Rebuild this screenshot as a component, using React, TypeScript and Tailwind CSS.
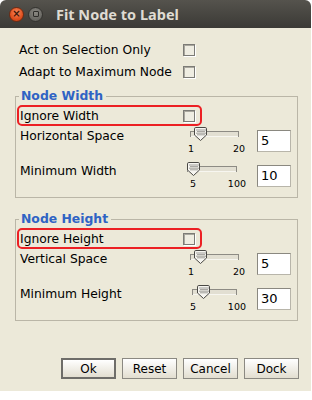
type SliderSpec = {
  trackX: number
  trackW: number
  thumbX: number
  min: string
  max: string
  pad: string
}

const font = { fontFamily: '"DejaVu Sans", Verdana, sans-serif' }

function Checkbox() {
  return (
    <div className="h-[12px] w-[12px] shrink-0 border border-[#7c7b76] bg-[#efede2] shadow-[inset_1px_1px_0_#a9a79e,1px_1px_0_#ffffff]" />
  )
}

function Slider({ s }: { s: SliderSpec }) {
  const dots: [number, number][] = []
  for (let r = 0; r < 4; r++) {
    for (let c = 0; c < 5; c++) {
      const x = 2.5 + c * 2 + (r % 2)
      if (x < 11) dots.push([x, 2.5 + r * 1.6])
    }
  }
  return (
    <div className="mt-[1px] flex w-[62px] flex-col">
      <svg width="62" height="15" viewBox="0 0 62 15">
        <rect x={s.trackX + 0.5} y="4.5" width={s.trackW - 1} height="5" fill="#e2dfd2" stroke="#8d8b84" />
        <line x1={s.trackX + 1} y1="9.5" x2={s.trackX + s.trackW - 1} y2="9.5" stroke="#f7f6f0" />
        <g transform={`translate(${s.thumbX} 0)`}>
          <path d="M0.5 1.8 Q0.5 0.5 1.8 0.5 H11.2 Q12.5 0.5 12.5 1.8 V8 L6.5 13.5 L0.5 8 Z" fill="#f6f5f0" stroke="#4a4945" />
          {dots.map(([x, y], i) => (
            <rect key={i} x={x} y={y} width="1" height="1" fill="#4e4d48" />
          ))}
        </g>
      </svg>
      <div className={`mt-[1px] flex justify-between text-[9.5px] leading-[11px] text-black ${s.pad}`}>
        <span>{s.min}</span>
        <span>{s.max}</span>
      </div>
    </div>
  )
}

function SliderRow({ label, value, s }: { label: string; value: string; s: SliderSpec }) {
  return (
    <div className="flex h-[35px] items-start pl-[4px]">
      <span className="mt-[2px] w-[165px] text-[12.3px] leading-[16px] text-black">{label}</span>
      <Slider s={s} />
      <div className="ml-[10px] mt-[4px] h-[22px] w-[34px] border border-[#8a8880] border-b-[#b8b5aa] border-r-[#b8b5aa] bg-white pl-[3px] text-[13px] leading-[20px] text-black">
        {value}
      </div>
    </div>
  )
}

function Group({ title, ignore, rows }: { title: string; ignore: string; rows: { label: string; value: string; s: SliderSpec }[] }) {
  return (
    <fieldset className="ml-[15px] w-[283px] border border-[#bab6a7] pb-[1px]">
      <legend className="ml-[3px] pl-[2px] pr-[3px] text-[12.4px] font-bold leading-[16px] text-[#2f63c4]">{title}</legend>
      <div className="ml-[1px] mt-[1px] flex h-[21px] w-[185px] items-center rounded-[5px] border-2 border-[#ec2024] pl-[1px]">
        <span className="w-[163px] text-[12.3px] leading-[16px] text-black">{ignore}</span>
        <Checkbox />
      </div>
      {rows.map((r) => (
        <SliderRow key={r.label} label={r.label} value={r.value} s={r.s} />
      ))}
    </fieldset>
  )
}

function Button({ label, focused }: { label: string; focused?: boolean }) {
  return (
    <div
      className={`flex h-[21px] w-[55px] items-center justify-center bg-gradient-to-b from-[#ffffff] to-[#e2ded0] text-[12px] text-black ${
        focused ? 'border-2 border-[#6e6d69]' : 'border border-[#8b8982]'
      }`}
    >
      {label}
    </div>
  )
}

export default function App() {
  return (
    <div className="h-[400px] w-[312px] bg-white" style={font}>
      <div className="flex h-[391px] w-[311px] flex-col">
        <div className="flex h-[28px] shrink-0 items-center rounded-t-[6px] bg-gradient-to-b from-[#55534d] to-[#3b3a36]">
          <div className="ml-[9px] flex h-[15px] w-[15px] items-center justify-center rounded-full border border-[#6e2a12] bg-[radial-gradient(circle_at_50%_35%,#f7885c,#e0501f_60%,#b93a12)] text-[10px] font-bold leading-none text-[#3a1608]">
            ×
          </div>
          <div className="ml-[4px] flex h-[15px] w-[15px] items-center justify-center rounded-full border border-[#34332f] bg-[radial-gradient(circle_at_50%_35%,#8a8882,#6a6964_65%,#55544f)]">
            <div className="h-[6px] w-[6px] rounded-[1px] border border-[#2e2d2a]" />
          </div>
          <span
            className="ml-[13px] text-[14.5px] font-bold leading-none text-[#dfdbd2]"
            style={{ fontFamily: '"Noto Sans", "Open Sans", sans-serif' }}
          >
            Fit Node to Label
          </span>
        </div>

        <div className="flex flex-1 flex-col bg-[#ece9d9] pb-[12px] pt-[11px]">
          <div className="flex h-[22px] items-center pl-[19px]">
            <span className="w-[164px] text-[12.3px] text-black">Act on Selection Only</span>
            <Checkbox />
          </div>
          <div className="flex h-[22px] items-center pl-[19px]">
            <span className="w-[164px] text-[12.3px] text-black">Adapt to Maximum Node</span>
            <Checkbox />
          </div>

          <div className="mt-[5px]">
            <Group
              title="Node Width"
              ignore="Ignore Width"
              rows={[
                { label: 'Horizontal Space', value: '5', s: { trackX: 5, trackW: 49, thumbX: 9, min: '1', max: '20', pad: 'pl-[3px] pr-[2px]' } },
                { label: 'Minimum Width', value: '10', s: { trackX: 2, trackW: 50, thumbX: 2, min: '5', max: '100', pad: 'pl-[5px] pr-[1px]' } },
              ]}
            />
          </div>

          <div className="mt-[13px]">
            <Group
              title="Node Height"
              ignore="Ignore Height"
              rows={[
                { label: 'Vertical Space', value: '5', s: { trackX: 5, trackW: 49, thumbX: 9, min: '1', max: '20', pad: 'pl-[3px] pr-[2px]' } },
                { label: 'Minimum Height', value: '30', s: { trackX: 7, trackW: 45, thumbX: 12, min: '5', max: '100', pad: 'pl-[5px] pr-[1px]' } },
              ]}
            />
          </div>

          <div className="mt-auto flex justify-end gap-[6px] pr-[12px]">
            <Button label="Ok" focused />
            <Button label="Reset" />
            <Button label="Cancel" />
            <Button label="Dock" />
          </div>
        </div>
      </div>
    </div>
  )
}
